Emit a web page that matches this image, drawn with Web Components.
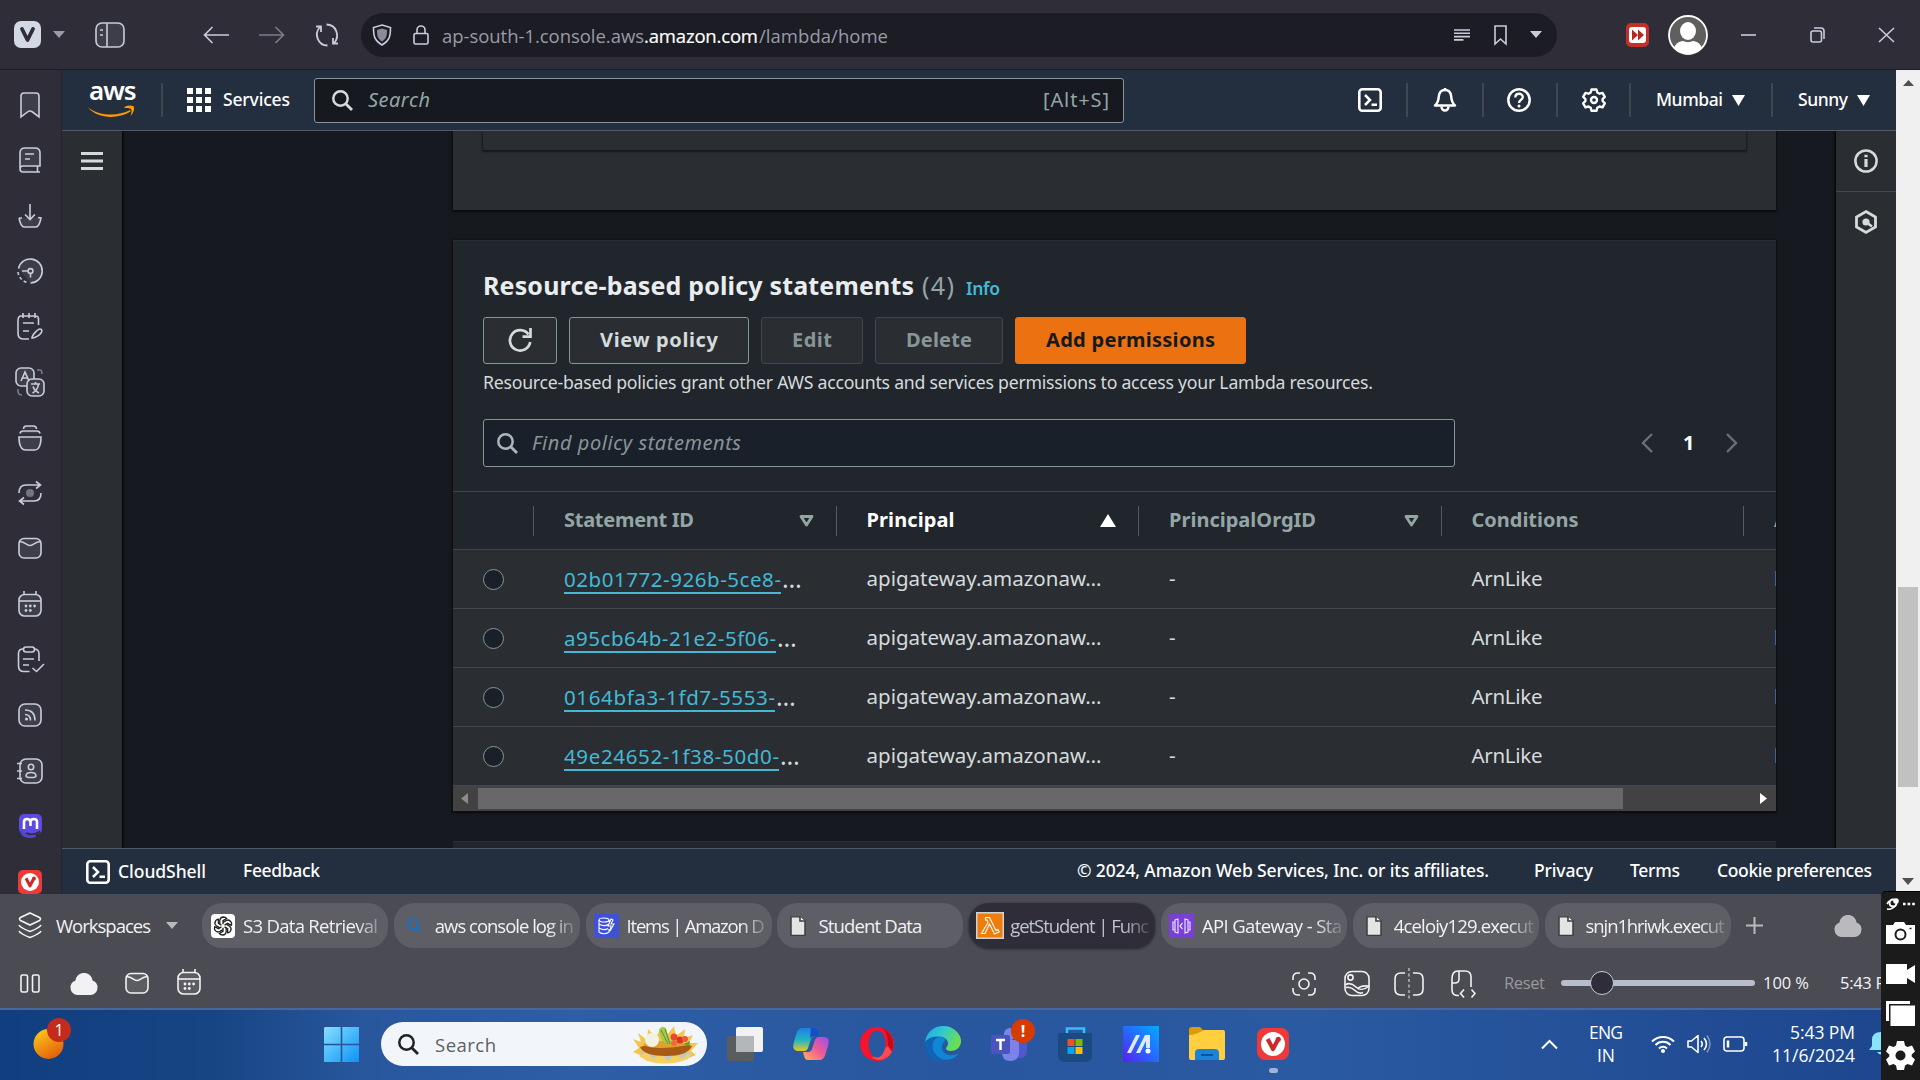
<!DOCTYPE html>
<html lang="en">
<head>
<meta charset="utf-8">
<title>Lambda console</title>
<style>
html,body{margin:0;height:100%;background:#16191f;overflow:hidden}
body{font-family:"Open Sans","Noto Sans",sans-serif}
</style>
</head>
<body>
<desktop-screen></desktop-screen>
<script>
const base = '*{box-sizing:border-box}ui-icon,fit-text{flex:none}';
function define(name, css, html) {
  const t = document.createElement('template');
  t.innerHTML = `<style>${base}${css}</style>${html}`;
  customElements.define(name, class extends HTMLElement {
    constructor() { super(); this.attachShadow({mode: 'open'}); }
    connectedCallback() {
      if (!this.shadowRoot.childNodes.length) this.shadowRoot.append(document.importNode(t.content, true));
    }
  });
}

/* Text run tracked so that it spans the width given in "w". */
customElements.define('fit-text', class extends HTMLElement {
  constructor() {
    super();
    this.attachShadow({mode: 'open'}).innerHTML = '<style>:host{display:inline-block;white-space:nowrap}</style><slot></slot>';
  }
  connectedCallback() {
    const w = +this.getAttribute('w');
    if (!w) return;
    const n = this.textContent.length, cur = this.getBoundingClientRect().width;
    if (n > 1) this.style.letterSpacing = ((w - cur) / (n - 1)) + 'px';
    this.style.width = w + 'px';
  }
});

const soft = 'fill="currentColor" fill-opacity=".1"';
const doc = '<path d="M1 1h9l5 5v17H1z" fill="#e4e4e4" stroke="#3c3c40" stroke-width="1.5"/><path d="M10 1v5h5" fill="#fff" stroke="#3c3c40"/>';
const viv = (r) => `<rect width="24" height="24" rx="${r}" fill="#ef3939"/><circle cx="12" cy="12" r="9" fill="#fff"/><path d="M8 8.2l4 7.6 4-7.6" fill="none" stroke="#c92a2a" stroke-width="3.1" stroke-linejoin="round"/><circle cx="16" cy="8.4" r="1.9" fill="#c92a2a"/>`;
const mail = `<rect x="1" y="1.5" width="22" height="19.5" rx="5" ${soft}/><path d="M1.5 4.5c6 .5 7.500 4 10.500 4s4.500-3.500 10.500-4"/>`;
const cal = `<path d="M6 0v4M18 0v4"/><rect x="1" y="3.500" width="22" height="21.500" rx="5.500" ${soft}/><path d="M1 10h22"/><g fill="currentColor" stroke="none"><circle cx="8" cy="15" r="1.400"/><circle cx="12.300" cy="15" r="1.400"/><circle cx="16.600" cy="15" r="1.400"/><circle cx="8" cy="19.500" r="1.400"/><circle cx="12.300" cy="19.500" r="1.400"/></g>`;
const I = {
  vlogo: [27,27,'<rect width="27" height="27" rx="7" fill="#d3d8e4"/><path d="M8 8l5.500 11L19 8" fill="none" stroke="#2f2e38" stroke-width="3.800" stroke-linejoin="round" stroke-linecap="round"/>'],
  caret: [12,7,'<path d="M0 0h12L6 7z" fill="currentColor"/>'],
  caretb: [13,11,'<path d="M0 0h13L6.500 11z" fill="currentColor"/>'],
  panel: [30,26,`<rect x="1" y="1" width="28" height="24" rx="6" ${soft}/><path d="M12 1v24M5 8h3M5 13h3"/>`],
  back: [26,18,'<path d="M26 9H1.500M9.500 1L1.500 9l8 8"/>'],
  fwd: [26,18,'<path d="M0 9h24.500M16.500 1l8 8-8 8"/>'],
  reload: [24,24,'<path d="M12.500 22.500C3 22.500-1.500 11 5 4M1 3.500h5V9M11.500 1.500C21 1.500 25.500 13 19 20M23 20.500h-5V15" stroke-width="1.800"/>'],
  shield: [20,22,'<path d="M10 1l8.500 2.500c0 9-1 13-8.500 17.500C2.500 16.500 1.500 12.500 1.500 3.500z"/><path d="M10 4.500l5 1.500c0 6-.7 8.500-5 11.500-4.300-3-5-5.500-5-11.500z" fill="#8a8c98" stroke="none"/>',1],
  lock: [16,20,'<rect x="1" y="8.500" width="14" height="10.500" rx="1.500"/><path d="M4 8.500V5a4 4 0 0 1 8 0v3.500"/>'],
  reader: [16,12,'<path d="M0 1h16M0 4.300h16M0 7.600h16M0 10.900h9.500" stroke-width="1.600"/>'],
  mark: [13,20,'<path d="M1 1h11v18l-5.500-5L1 19z"/>'],
  ext: [23,24,'<rect width="23" height="24" rx="5" fill="#c62f28"/><rect x="3" y="4" width="17" height="16" rx="3" fill="#fff"/><path d="M6 6.500l6 5.500-6 5.500zM12 6.500l6 5.500-6 5.500z" fill="#b8281f"/>'],
  avatar: [40,40,'<defs><clipPath id="c"><circle cx="20" cy="20" r="19"/></clipPath></defs><circle cx="20" cy="20" r="19" fill="#5f5f5f"/><g clip-path="url(#c)" fill="#fff"><ellipse cx="20" cy="16" rx="8" ry="9"/><path d="M4 42c0-12 7-16 11-16 3 1.500 7 1.500 10 0 4 0 11 4 11 16z"/></g><circle cx="20" cy="20" r="19" fill="none" stroke="#fff" stroke-width="1.800"/>'],
  min: [15,2,'<path d="M0 1h15"/>'],
  restore: [15,16,'<rect x="1" y="4" width="10.500" height="11" rx="2"/><path d="M4 1h7q3 0 3 3v8"/>'],
  close: [15,16,'<path d="M0 1l15 14M15 1L0 15"/>'],
  bookmark: [20,26,`<path d="M1 4q0-3 3-3h12q3 0 3 3v21l-6.500-5q-2.500-2-5 0L1 25z" ${soft}/>`],
  book: [22,26,`<path d="M1 21V6q0-5 5-5h10q5 0 5 5v13H4q-3 0-3 3t3 3h17M18.500 19.500v5M6 7h9M6 12h5" ${soft}/>`],
  download: [24,24,`<path d="M1 14c1 5 2 9 5 9h12c3 0 4-4 5-9l-3-.5M1 14h3M12 0v15M7 10.500l5 5 5-5" ${soft}/>`],
  history: [26,26,`<path d="M1.500 10.500a12 12 0 1 1 12 14.500" ${soft}/><path d="M1 14a12 12 0 0 0 9.500 10.500" stroke-dasharray="3 2.500"/><path d="M5 13h6.500M13.500 15.500v4"/><circle cx="13.500" cy="13" r="2.400"/>`],
  notes: [26,27,'<path d="M21.500 12V6q0-3-3-3H4Q1 3 1 8v12q0 6 5 6h6M6 0v5M12 0v5M18 0v5M6 10h11M6 18h6"/><path d="M15 25c0-3 6-9 8-9s2.500 2 1 4-6 5.500-9 5z"/>'],
  translate: [30,30,`<rect x="1" y="1" width="18" height="18" rx="5" ${soft}/><rect x="12" y="12" width="17" height="17" rx="5" fill="#3d3d47"/><path d="M6 14l4-9 4 9M7.500 11h5M16 17h9M20.500 15v2M17.500 26c4-2 5.500-5 6-9M18 19.500c1 3 3 5 6 6.500"/><path d="M22 3h3q2 0 2 4M3 22v2q0 4 4 4" opacity=".5"/>`,1],
  stack: [24,26,`<path d="M5.500 4q0-3 3-3h7q3 0 3 3M2 8.500q.5-2.500 3-2.500h14q2.500 0 3 2.500M1 12h22c0 5-1 9-2.500 11-1 2-3 2-4 2h-9c-2 0-3-.5-4-2C2 21 1 17 1 12z" ${soft}/>`],
  sync: [24,26,'<path d="M1 13C1 7 4 5 8 5h14M18 1.500L22.500 5 18 8.500M23 13c0 6-3 8-7 8H2M6 17.500L1.500 21 6 24.500"/><circle cx="12" cy="13" r="4" fill="currentColor" stroke="none" opacity=".45"/>'],
  mail: [24,23,mail], cal: [24,26,cal],
  tasks: [27,27,'<path d="M6 3Q1.500 3 1.500 7.500V20q0 5.500 5.500 5.500h5.500M17 3q5 0 5 5v7M6 13h11M6 19h6M15.500 22l4 3.500L27 18"/><rect x="6.500" y="1" width="11" height="5" rx="2.500"/>'],
  feed: [24,24,`<rect x="1" y="1" width="22" height="22" rx="6" ${soft}/><circle cx="8.500" cy="16" r="1.600" fill="currentColor" stroke="none"/><path d="M7 11.500q5.500 0 5.500 6M7 7q10 0 10 10.500"/>`],
  contacts: [26,26,`<rect x="3" y="1" width="22" height="24" rx="6" ${soft}/><path d="M0 5.500h5M0 13h5M0 20.500h5"/><circle cx="14" cy="9" r="2.700"/><path d="M9 18q0-3.500 5-3.500t5 3.500q0 1.500-5 1.500T9 18z"/>`],
  masto: [23,24,'<rect width="23" height="20" rx="5" fill="#5b4be0"/><path d="M1 15c0 7 5 9 10 9 3 0 5-.6 6-1.500l0-2H9z" fill="#5344cf"/><path d="M5 15V8q0-3 3-3t3.500 3v4V8q0-3 3.300-3t3.200 3v7" fill="none" stroke="#fff" stroke-width="2.600"/><path d="M7 19q7 3 14-1.500" fill="none" stroke="#2f2e38" stroke-width="1.500"/>'],
  viv: [24,24,viv(5)], viv2: [32,32,`<g transform="scale(1.333)">${viv(6)}</g>`],
  smile: [47,12,'<path d="M0 2.500c13 9.500 31 8.500 42 2.500l.5 1.500C29 15 9 13.500 0 2.500z" fill="#f90"/><path d="M36 3c2-3 7-3 10-1.500.5 3-.5 6.500-3.500 9.500 1-3 1.500-5.500.5-7-2-1.200-4-1.200-7-1z" fill="#f90"/>'],
  grid: [24,24,'<path d="M0 0h6v6H0zM9 0h6v6H9zM18 0h6v6h-6zM0 9h6v6H0zM9 9h6v6H9zM18 9h6v6h-6zM0 18h6v6H0zM9 18h6v6H9zM18 18h6v6h-6z" fill="currentColor"/>'],
  search: [21,21,'<circle cx="8.500" cy="8.500" r="7.200" stroke-width="2.500"/><path d="M13.500 13.500l6.500 6.500" stroke-width="2.800"/>'],
  shell: [24,24,'<rect x="1.300" y="1.300" width="21.400" height="21.400" rx="3" stroke-width="2.600"/><path d="M7 7l5 5-5 5M13.500 16.800H19" stroke-width="2.500"/>'],
  bell: [24,24,'<path d="M2 17.500c3-2.500 3.500-5 3.800-9C6.200 4 9 2 12 2s5.800 2 6.200 6.500c.3 4 .8 6.500 3.800 9z" stroke-width="2.500" stroke-linejoin="round"/><path d="M8.500 18.500a3.500 4 0 0 0 7 0M12 0v2" stroke-width="2.500"/>'],
  help: [24,24,'<circle cx="12" cy="12" r="10.700" stroke-width="2.500"/><path d="M8.300 9.500c0-5 7.500-4.800 7.500-.5 0 3-3.800 2.500-3.800 6" stroke-width="2.300"/><circle cx="12" cy="18" r="1.500" fill="currentColor" stroke="none"/>'],
  gear: [24,24,'<path d="M9.500 1.500h5l.8 3 2.200 1.200 3-.8 2.300 4-2.200 2.300v1.800l2.200 2.300-2.300 4-3-.8-2.200 1.200-.8 3h-5l-.8-3-2.200-1.200-3 .8-2.300-4L3.400 13v-2L1.200 8.900l2.300-4 3 .8 2.200-1.200z" stroke-width="2.400" stroke-linejoin="round"/><circle cx="12" cy="12" r="3" stroke-width="2.400"/>'],
  menu: [22,18,'<path d="M0 1.500h22M0 9h22M0 16.500h22" stroke-width="3"/>'],
  info: [24,24,'<circle cx="12" cy="12" r="10.600" stroke-width="2.500"/><path d="M12 10v8M12 5.800v2.400" stroke-width="3.200"/>'],
  hexa: [22,24,'<path d="M11 1.500l9.500 5.500v10L11 22.500 1.500 17V7z" stroke-width="2.800"/><circle cx="11" cy="12" r="3.600" fill="currentColor" stroke="none"/><path d="M11 12l6 4.500" stroke-width="2.600"/>'],
  up: [11,6,'<path d="M0 6h11L5.500 0z" fill="currentColor"/>'],
  refresh: [24,25,'<path d="M20.500 6.500A10.200 10.200 0 1 0 22.200 14" stroke-width="2.700"/><path d="M22.500 0v8.700H14.500" stroke-width="2.700"/>'],
  prev: [12,20,'<path d="M11 1L2 10l9 9" stroke-width="2.400"/>'], next: [12,20,'<path d="M1 1l9 9-9 9" stroke-width="2.400"/>'],
  sort: [15,12,'<path d="M2 1.500h11L7.500 10z" stroke-width="2.800" stroke-linejoin="round"/>'],
  sorted: [16,13,'<path d="M0 13h16L8 0z" fill="currentColor"/>'],
  left: [7,11,'<path d="M7 0v11L0 5.500z" fill="currentColor"/>'], right: [7,11,'<path d="M0 0v11l7-5.500z" fill="currentColor"/>'],
  spaces: [24,27,'<path d="M12 1l9.500 4.500q2 1.500 0 3L12 13 2.500 8.500q-2-1.500 0-3zM1 13c1 2 7 5 11 6.500 4-1.500 10-4.500 11-6.500M1 19c1 2 7 5 11 6.500 4-1.500 10-4.500 11-6.500"/>'],
  gpt: [24,24,'<rect width="24" height="24" rx="4" fill="#fff"/><g fill="none" stroke="#222" stroke-width="1.300">'+[0,60,120,180,240,300].map(a=>`<path transform="rotate(${a} 12 12)" d="M8.800 10.200V6.200q.5-3 3.600-3.200 2 0 3.200 1.500L12 6.700v3.500"/>`).join('')+'</g>'],
  bsearch: [15,15,'<circle cx="6" cy="6" r="5" stroke="#1671c4" stroke-width="2.200"/><path d="M9.500 9.500L14 14" stroke="#1671c4" stroke-width="2.200"/>'],
  dynamo: [25,24,'<rect width="25" height="24" fill="#3f51d6"/><g stroke="#fff" stroke-width="1.100" fill="none"><ellipse cx="10" cy="6" rx="5" ry="2"/><path d="M5 6v12q5 3.500 10 0v-3M5 10q5 3 9 .5M5 14q5 3 9 .5M15 6v2M17 5l-3 7h3l-1 5 4-7h-3l2-4z"/></g>'],
  doc: [16,24,`<g transform="translate(0 2) scale(1 .84)">${doc}</g>`],
  lambda: [28,27,'<rect width="28" height="27" fill="#d3d3d3"/><rect x="1.500" y="1.500" width="25" height="24" fill="#ee7d0b"/><path d="M9.500 5.500h4l6.500 13 2-1 1 2.500-4.500 2-5-10-4.500 9.500H5.500L12 10.500 11 8H9.500z" fill="none" stroke="#fff" stroke-width="1.100"/>'],
  api: [25,24,'<rect width="25" height="24" fill="#7a3fd6"/><path d="M9 5L6 6v12l3 1zM16 5l3 1v12l-3 1zM6 8H4v8h2M19 8h2v8h-2M13.500 9l-2.500 3 2.500 3" fill="none" stroke="#e8dcff" stroke-width="1.200"/>'],
  plus: [17,17,'<path d="M8.500 0v17M0 8.500h17" stroke-width="2"/>'],
  cloud: [30,22,'<path d="M8 22a7.500 7.500 0 0 1-1.500-14.500C7 2.500 11 0 15 0s8 2.500 8.500 7.500A7.500 7.500 0 0 1 22 22z" fill="currentColor"/>'],
  pause: [20,19,'<rect x="1" y="1" width="6.500" height="17" rx="1.500"/><rect x="12.500" y="1" width="6.500" height="17" rx="1.500"/>'],
  capture: [24,24,'<path d="M1 8V6q0-5 5-5h2M16 1h2q5 0 5 5v2M23 16v2q0 5-5 5h-2M8 23H6q-5 0-5-5v-2"/><circle cx="12" cy="12" r="5"/>'],
  image: [26,27,'<rect x="1" y="1.500" width="24" height="24" rx="7"/><circle cx="6.500" cy="7.500" r="2.600"/><path d="M1 15c4-2.500 8-1 11 2s8 3.500 13-1"/><path d="M14 18.500c2-2.500 6-3 11-2.500M2 17.500c4-1 7 1 9 3s5 3.500 8 2"/>'],
  split: [30,32,'<path d="M11 5H7q-6 0-6 6v10q0 6 6 6h4M19 5h4q6 0 6 6v10q0 6-6 6h-4"/><path d="M15 0v32" stroke-dasharray="3 2.500" opacity=".6"/>'],
  pagecode: [25,27,'<path d="M8 25.500Q1 26 1 20V9q0-8 6-8h7q6 0 6 6v10M1 13h3q4 0 4-4V1M13 19.500l-3.500 4 3.500 4M20.500 19.500l3.500 4-3.500 4"/>'],
  weather: [31,30,'<defs><linearGradient id="w" x2=".6" y2="1"><stop stop-color="#ffd21c"/><stop offset="1" stop-color="#e4610b"/></linearGradient></defs><circle cx="15.500" cy="15" r="15" fill="url(#w)"/>'],
  win: [35,35,'<defs><linearGradient id="g" x2="1" y2="1"><stop stop-color="#87dffd"/><stop offset="1" stop-color="#0a94f7"/></linearGradient></defs><path d="M1 0h15.700v16.700H0V1zM18.300 0H35v16.700H18.300zM0 18.300h16.700V35H0zM18.300 18.300H35V35H18.300z" fill="url(#g)"/>'],
  food: [70,40,'<path d="M2 15l8 3-3-9 9 7 1-11 8 8 6-11 5 9 7-9 2 10 9-7-1 9 9-3-4 8 9 0-7 8 5 4-12 5-12 2H26L9 31l-7-3 6-4z" fill="#f4c64e"/><ellipse cx="35" cy="31" rx="26" ry="6" fill="#bfc9c2"/><path d="M8 32l8-4 6 7 8-6 7 8 7-8 7 6 10-8-4 8q-20 8-41 2z" fill="#f6cf5f"/><path d="M9 23q26-9 52-1-4 10-26 10T9 23z" fill="#a85b14"/><path d="M12 21q12 6 46 0-5-4-24-4t-22 4z" fill="#e1a22a"/><circle cx="21" cy="16" r="7" fill="#f2f2e4"/><path d="M28 5q7-5 8 3l5 13q-13-1-13-16z" fill="#a8c850"/><path d="M30 6l7 14M34 5l5 15" stroke="#668d2a" stroke-width="1"/><circle cx="43" cy="13" r="3.500" fill="#e84a2b"/><circle cx="49" cy="16" r="3.500" fill="#d93520"/><circle cx="43" cy="19" r="3" fill="#ee6a3c"/><circle cx="54" cy="15" r="3" fill="#ee5a35"/><path d="M53 20l6-3-1 5z" fill="#5f9e3a"/>'],
  tview: [36,34,'<rect y="9" width="27" height="25" rx="2" fill="#595d60"/><rect x="9" width="27" height="25" rx="2" fill="#f2f2f2"/><path d="M9 9h18v16H9z" fill="#b3b7ba"/>'],
  copilot: [36,34,'<defs><linearGradient id="a" x2="0" y2="1"><stop stop-color="#1b7fe6"/><stop offset=".55" stop-color="#27b6c0"/><stop offset="1" stop-color="#e9c81f"/></linearGradient><linearGradient id="b" x1="1" x2="0" y2="1"><stop stop-color="#9b4cf0"/><stop offset=".5" stop-color="#ef5b93"/><stop offset="1" stop-color="#ffb25b"/></linearGradient></defs><path d="M10 1h12q3 0 4 4l1 4h-6q-2 0-3 3l-3 9q-1 3-4 3H5q-6 0-4.500-7l3-11Q5 1 10 1z" fill="url(#a)"/><path d="M18 1h4q3 0 4 4l1 4h-6q-3 0-4 3z" fill="#174ec2"/><path d="M26 33H15q-3 0-4-4l-1-4h5q3 0 4-3l3-9q1-3 4-3h5q6 0 4.500 7l-3 10Q31 33 26 33z" fill="url(#b)"/>'],
  opera: [34,34,'<circle cx="17" cy="17" r="17" fill="#f5142b"/><path d="M22 1a17 17 0 0 1 0 32q6-4 6-16T22 1z" fill="#c30a1d"/><path d="M12 31q12 6 20-6l-4-6z" fill="#ff4a4f"/><ellipse cx="17" cy="17" rx="8.500" ry="13.500" fill="#28589f"/>'],
  edge: [36,36,'<defs><linearGradient id="e" x2="1" y2=".4"><stop stop-color="#1ba5e8"/><stop offset=".5" stop-color="#2fc9d0"/><stop offset="1" stop-color="#6bdf50"/></linearGradient></defs><path d="M0 17C1 6 9 0 18 0c11 0 18 8 18 15 0 7-6 10-10 10-3 0-5-1-5-2.500s2-2 2-5c0-4-4-7-9-7C7 10.500 1 14 0 17z" fill="url(#e)"/><path d="M0 17c2-5 8-7 13-6-5 1-8 7-6 13 2 7 8 11 14 11-10 3-21-5-21-18z" fill="#0d65b8"/><path d="M13 11c-7 3-7 13-2 18 6 7 18 6 23-2-6 4-17 3-17-6 0-5 4-5 3-8-2-2-5-2.500-7-2z" fill="#1086d6"/>'],
  teams: [36,36,'<circle cx="19" cy="8" r="6" fill="#7b83eb"/><circle cx="30" cy="11" r="4" fill="#5059c9"/><path d="M22 14h14v11q0 7-7 7h-4z" fill="#5059c9"/><path d="M11 14h17v12q0 9-9 9-8 0-8-9z" fill="#7b83eb"/><rect y="9" width="19" height="19" rx="2" fill="#4b53bc"/><path d="M5 14h9M9.500 14v10" stroke="#fff" stroke-width="2.500" fill="none"/>'],
  store: [34,35,'<path d="M9 7V1.500h17V7" fill="none" stroke="#35c0f5" stroke-width="2.500"/><path d="M0 6h34v22q0 7-7 7H7q-7 0-7-7z" fill="#1b4a80"/><path d="M9.500 12h7v7h-7z" fill="#f25022"/><path d="M17.500 12h7v7h-7z" fill="#7fba00"/><path d="M9.500 20h7v7h-7z" fill="#00a4ef"/><path d="M17.500 20h7v7h-7z" fill="#ffb900"/>'],
  asus: [36,36,'<defs><linearGradient id="m" x1="0" y1="1" x2="1" y2="0"><stop stop-color="#5b1df5"/><stop offset=".5" stop-color="#2569ff"/><stop offset="1" stop-color="#05aaff"/></linearGradient></defs><rect width="36" height="36" fill="url(#m)"/><path d="M4 27L13 9h4L8 27zM13 27L22 9h4L17 27zM23 9h4v13h-4z" fill="#dfe9ff"/><circle cx="25" cy="25" r="2.500" fill="#fff"/>'],
  folder: [36,34,'<path d="M0 3q0-3 3-3h8l4 4v6H0z" fill="#dd9b07"/><path d="M0 8q7 0 15-5h19q2 0 2 2v26q0 2-2 2H2q-2 0-2-2z" fill="#ffcf3f"/><path d="M6 33v-7q0-4 4-4h16q4 0 4 4v7z" fill="#1a83d8"/><path d="M12 28h12" stroke="#0b5296" stroke-width="2"/>'],
  chev: [17,9,'<path d="M1 8.500L8.500 1 16 8.500" stroke-width="2"/>'],
  wifi: [24,18,'<path d="M1 6.500a15.500 15.500 0 0 1 22 0M4.500 10a10.500 10.500 0 0 1 15 0M8 13.500a5.700 5.700 0 0 1 8 0" stroke-width="2"/><circle cx="12" cy="16" r="2" fill="currentColor" stroke="none"/>'],
  sound: [24,20,'<path d="M1 7h3.500L11 1.500v17L4.500 13H1z" stroke-linejoin="round"/><path d="M14 7q2.500 3 0 6M17 4q5 6 0 12"/><path d="M20 1.500q6 8.500 0 17" opacity=".4"/>'],
  battery: [24,16,'<rect x="1" y="1" width="20" height="14" rx="3"/><path d="M23 6v4M5 4.500v7" stroke-width="2.500"/>'],
  notif: [24,24,'<path d="M0 18l3-4V8q0-8 9-8t9 8v6l3 4zM8 20h8q-4 5-8 0z" fill="#87e4fc"/>'],
  brush: [13,12,'<circle cx="7" cy="5" r="3.500" stroke-width="2"/><circle cx="10" cy="3" r="2" fill="currentColor"/><path d="M1 11q5 1 9-4M1 6l2-3" stroke-width="1.500"/>'],
  dots: [12,4,'<path d="M0 2h2.600M4.600 2h2.600M9.200 2h2.600" stroke-width="2.600"/>'],
  camera: [29,22,'<path d="M0 3h7l2-3h9l2 3h9v19H0z" fill="#fff"/><circle cx="14.500" cy="12.500" r="5" fill="none" stroke="#1b1b1b" stroke-width="2"/><path d="M23.500 6.500h2" stroke="#1b1b1b" stroke-width="1.500"/>'],
  video: [29,20,'<path d="M0 0h21v6l8-5v18l-8-5v6H0z" fill="#fff"/>'],
  layers: [29,25,'<path d="M0 0h24v3H3v17H0z" fill="#fff"/><path d="M4.500 4.500H29V25H4.500z" fill="#fff"/>'],
  cog: [29,29,'<path d="M11 0h7l1 4.500 2.500 1.400L26 4.500l3 6-3.300 3v2l3.300 3-3 6-4.500-1.400L19 24.500 18 29h-7l-1-4.500-2.500-1.400L3 24.500l-3-6 3.300-3v-2L0 10.500l3-6 4.500 1.400L10 4.500z" fill="#fff"/><circle cx="14.500" cy="14.500" r="5" fill="#1b1b1b"/>']
};
customElements.define('ui-icon', class extends HTMLElement {
  constructor() { super(); this.attachShadow({mode: 'open'}); }
  connectedCallback() {
    const [w, h, body, stroked] = I[this.getAttribute('name')];
    this.shadowRoot.innerHTML = `<style>:host{display:block;width:${w}px;height:${h}px}svg{display:block;overflow:visible}</style><svg width="${w}" height="${h}" viewBox="0 0 ${w} ${h}" fill="none" stroke="currentColor" stroke-width="1.6"><g ${!stroked && /fill="#|url\(|^<path[^>]*fill="currentColor"\/>$/.test(body) ? 'stroke="none"' : ''}>${body}</g></svg>`;
  }
});
const ic = (name, ml = 0, extra = '') => `<ui-icon name="${name}" style="margin-left:${ml}px;${extra}"></ui-icon>`;
const tx = (s, w, ml = 0, extra = '') => `<fit-text w="${w}" style="margin-left:${ml}px;${extra}">${s}</fit-text>`;
const dv = (ml) => `<i class="dv" style="margin-left:${ml}px"></i>`;

define('browser-toolbar', `:host{display:flex;align-items:center;height:70px;background:#2f2e38;border-bottom:1px solid #1d1c24;color:#c8ccdb;flex:none}
.pill{display:flex;align-items:center;width:1196px;height:44px;border-radius:22px;background:#1c1c24;margin-left:22px;font-size:18.500px;color:#989ba8}
.pill ui-icon{color:#c8ccdb}.pill fit-text{margin-top:1px}`,
 ic('vlogo',14)+ic('caret',12,'color:#989ba8')+ic('panel',30)+ic('back',78)+ic('fwd',30,'opacity:.5')+ic('reload',30)+
 `<div class="pill">${ic('shield',11)+ic('lock',21)+tx('ap-south-1.console.aws',202,13)+tx('.amazon.com',114,0,'color:#fff;-webkit-text-stroke:.2px')+tx('/lambda/home',129,1)+ic('reader',566)+ic('mark',24)+ic('caret',23)}</div>`+
 ic('ext',69)+ic('avatar',19)+ic('min',33)+ic('restore',54)+ic('close',54));

const side = ['bookmark','book','download','history','notes','translate','stack','sync','mail','cal','tasks','feed','contacts','masto','viv'];
define('side-panel', `:host{display:block;width:62px;padding-top:7px;background:#2f2e38;border-right:1px solid #27262e;color:#c8ccdb;flex:none;overflow:hidden}
.c{height:55.500px;display:flex;align-items:center;justify-content:center;margin-right:1px}`,
 side.map(n => `<div class="c">${ic(n)}</div>`).join(''));

define('console-header', `:host{display:flex;align-items:center;height:61px;background:#232f3e;border-bottom:1px solid #545b64;color:#fff;font-size:17.500px;font-weight:500;flex:none}
.dv{width:2px;height:34px;background:#414750;flex:none}.logo{width:47px;margin-left:26px;flex:none}.logo fit-text{font-size:26px;font-weight:600;line-height:24px;display:block;height:24px;margin-top:-6px}
.s{display:flex;align-items:center;width:810px;height:45px;margin-left:24px;border:1px solid #879596;border-radius:3px;background:#16191f;font-weight:400;font-size:20px;color:#95a5a6;flex:none}`,
 `<div class="logo">${tx('aws',44,1)}${ic('smile',0,'margin-top:3px')}</div>`+dv(26)+ic('grid',24)+tx('Services',67,12,'margin-top:-2px')+
 `<div class="s">${ic('search',17,'color:#d5dbdb')+tx('<em>Search</em>',62,15,'margin-top:-2px')+tx('[Alt+S]',66,613,'margin-top:-2px')}</div>`+
 ic('shell',234)+dv(24)+ic('bell',25)+dv(25)+ic('help',23)+dv(25)+ic('gear',24)+dv(23)+tx('Mumbai',67,25,'margin-top:-2px')+ic('caretb',9)+dv(26)+tx('Sunny',50,25,'margin-top:-2px')+ic('caretb',9));

const col = (s, w, icon, cls='') => `<div class="col ${cls}"><fit-text ${w?`w="${w}"`:''}>${s}</fit-text>${icon?`<ui-icon name="${icon}"></ui-icon>`:''}</div>`;
const row = (id, w) => `<div class="row"><div class="r0"><i></i></div><div class="col">${tx(id,w,0,'color:#44b9d6;border-bottom:2px solid #44b9d6;line-height:22px;height:26px;margin-top:3px')}${tx('...',21,1)}</div><div class="col">${tx('apigateway.amazonaw…',235)}</div><div class="col">${tx('-',8)}</div><div class="col">${tx('ArnLike',71)}</div><div class="col">${tx('l',5)}</div></div>`.replace('>...<', '>…<').replace('w="21" style="', 'w="21" style="font-size:25px;');
define('policy-table', `:host{display:block;overflow:hidden;color:#d5dbdb;font-size:20.500px}
.row,.head{display:flex;align-items:center;width:1323px;overflow:hidden}
.head{height:59px;border-top:1px solid #414750;border-bottom:1px solid #414750;font-weight:700;font-size:20px;color:#95a5a6}
.row{height:59px;background:#2a2e33;border-bottom:1px solid #414750}.row:last-of-type{border-bottom-color:#2a2e33}
.r0{width:81px;padding-left:30px;flex:none}.head .r0{width:80px}.r0 i{display:block;width:21px;height:21px;border:1.500px solid #879596;border-radius:50%;background:#1a2029}
.col{width:302.500px;flex:none;display:flex;align-items:center;padding-left:30px;white-space:nowrap}.col fit-text{margin-top:-2px}
.head .col{height:30px;border-left:1px solid #545b64;justify-content:space-between;padding-right:22px}
.on{color:#fff}.bar{height:25px;background:#424242;display:flex;align-items:center;justify-content:space-between;padding:0 9px 0 8px;color:#8b8b8b}
.bar i{width:1145px;height:21px;background:#686868;margin-left:10px;margin-right:auto}`,
 `<div class="head"><div class="r0"></div>${col('Statement ID',130,'sort')}${col('Principal',88,'sorted','on')}${col('PrincipalOrgID',147,'sort')}${col('Conditions',107)}${col('A',14)}</div>`+
 row('02b01772-926b-5ce8-',217)+row('a95cb64b-21e2-5f06-',212)+row('0164bfa3-1fd7-5553-',211)+row('49e24652-1f38-50d0-',215)+
 `<div class="bar">${ic('left')}<i></i>${ic('right',0,'color:#fff')}</div>`);

define('action-button', `:host{display:flex;align-items:center;justify-content:center;height:47px;border:1px solid #879596;border-radius:3px;background:#2a2e33;color:#d5dbdb;font-size:20px;font-weight:700;margin-right:12px}
:host([disabled]){border-color:#414750;color:#879596}:host([primary]){background:#ec7211;border-color:#ec7211;color:#16191f}`, '<slot></slot>');

define('policy-card', `:host{display:block;width:1323px;height:571px;background:#21252c;border-top:1px solid #2a2e33;box-shadow:0 1px 2px 1px rgba(0,0,0,.55);margin:30px 0 30px 331px;flex:none}
.pad{height:250px;padding:0 30px;overflow:hidden}
h2{margin:26px 0 0;font-size:25px;line-height:36px;height:36px;color:#eaeded;display:flex;align-items:baseline;font-weight:700}
.btns{display:flex;margin-top:14px}.btns fit-text{margin-top:-2px}p{margin:5px 0 0;font-size:17.700px;line-height:26px;color:#d5dbdb;height:26px}
.find{display:flex;align-items:center;margin-top:24px}.in{width:972px;height:48px;border:1px solid #879596;border-radius:3px;background:#1a2029;color:#879596;font-size:20px;display:flex;align-items:center;flex:none}`,
 `<div class="pad"><h2>${tx('Resource-based policy statements',431)+tx('(4)',32,8,'font-weight:400;color:#95a5a6')+tx('Info',34,12,'font-size:17.500px;font-weight:600;color:#44b9d6')}</h2>
 <div class="btns"><action-button style="width:74px">${ic('refresh')}</action-button><action-button style="width:180px">${tx('View policy',118)}</action-button><action-button disabled style="width:102px">${tx('Edit',40)}</action-button><action-button disabled style="width:128px">${tx('Delete',66)}</action-button><action-button primary style="width:231px">${tx('Add permissions',169)}</action-button></div>
 <p>${tx('Resource-based policies grant other AWS accounts and services permissions to access your Lambda resources.',890)}</p>
 <div class="find"><div class="in">${ic('search',13,'color:#aab7b8')+tx('<em>Find policy statements</em>',209,14,'margin-top:-2px')}</div>${ic('prev',186,'color:#687078')+tx('1',11,30,'font-size:20px;font-weight:700;color:#fff;margin-top:-2px')+ic('next',32,'color:#687078')}</div></div>
 <policy-table></policy-table>`);

define('console-body', `:host{display:flex;height:717px;background:#16191f;overflow:hidden;color:#d5dbdb;flex:none}
.nav{width:60px;background:#2a2e33;padding:21px 19px;box-shadow:1px 0 2px #000;flex:none}.main{width:1714px;display:flex;flex-direction:column;overflow:hidden;flex:none}
.prev{width:1323px;height:79px;margin-left:331px;background:#2a2e33;padding:0 30px;box-shadow:0 1px 2px 1px rgba(0,0,0,.55);flex:none}.prev div{height:19px;box-shadow:0 1px 2px 1px rgba(0,0,0,.5);clip-path:inset(0 -4px -4px -4px)}
.nxt{width:1323px;height:20px;margin-left:331px;background:#21252c;border-top:1px solid #2a2e33;flex:none}
.tools{width:60px;background:#2a2e33;box-shadow:-1px 0 2px #000;flex:none}.tools div{height:61px;display:flex;align-items:center;justify-content:center;border-bottom:1px solid #414750}.tools div:last-child{border:0;height:60px}`,
 `<div class="nav">${ic('menu')}</div><div class="main"><div class="prev"><div></div></div><policy-card></policy-card><div class="nxt"></div></div><div class="tools"><div>${ic('info')}</div><div>${ic('hexa')}</div></div>`);

define('console-footer', `:host{display:flex;align-items:center;height:46px;background:#232f3e;border-top:1px solid #545b64;color:#fff;font-size:17.500px;font-weight:500;flex:none}fit-text{margin-top:-4px}`,
 ic('shell',24)+tx('CloudShell',88,8,'margin-top:-1px')+tx('Feedback',77,37)+tx('© 2024, Amazon Web Services, Inc. or its affiliates.',412,757)+tx('Privacy',59,45)+tx('Terms',50,37)+tx('Cookie preferences',155,37));

define('page-scrollbar', `:host{display:flex;flex-direction:column;align-items:center;width:24px;height:824px;background:#f0f0f0;color:#505050;flex:none}i{width:20px;height:200px;background:#c1c1c1;margin-top:501px}`,
 ic('up',0,'margin-top:10px')+'<i></i>'+ic('caret',0,'margin-top:91px'));

define('page-tab', `:host{display:flex;align-items:center;width:186px;height:45px;border-radius:20px;background:#5e5e66;color:#f2f2f4;font-size:18.500px;margin-right:5.800px;flex:none;overflow:hidden;padding-left:9px;white-space:nowrap}
:host([active]){background:#2f2e38;color:#c0c3d2;padding-left:7px;box-shadow:0 1px 3px rgba(0,0,0,.5)}
.i{width:24px;display:flex;justify-content:center;flex:none}:host([active]) .i{width:28px}
.t{margin-left:8px;flex:none;width:141px;overflow:hidden}:host([fade]) .t{-webkit-mask:linear-gradient(90deg,#000 calc(100% - 28px),transparent calc(100% + 4px))}:host([active]) .t{margin-left:6px}`,
 '<div class="i"><slot name="icon"></slot></div><div class="t"><slot></slot></div>');
const tab = (icon, s, w, attr='fade') => `<page-tab ${attr}><ui-icon slot="icon" name="${icon}"></ui-icon>${tx(s,w)}</page-tab>`;
define('tab-strip', `:host{display:flex;align-items:center;height:63px;background:#4b4b53;color:#f2f2f4;font-size:18.500px;flex:none}`,
 ic('spaces',18)+tx('Workspaces',95,14)+ic('caret',15,'color:#b9b9be;margin-right:24px')+
 tab('gpt','S3 Data Retrieval',135)+tab('bsearch','aws console log in',139)+tab('dynamo','Items | Amazon D',138)+tab('doc','Student Data',104,'')+tab('lambda','getStudent | Func',139,'active fade')+tab('api','API Gateway - Sta',140)+tab('doc','4celoiy129.execut',140)+tab('doc','snjn1hriwk.execut',139)+
 ic('plus',10,'color:#b9b9be')+ic('cloud',70,'color:#b9b9be'));

define('status-bar', `:host{display:flex;align-items:center;height:51px;background:#4b4b53;color:#f2f2f4;font-size:16.500px;flex:none}ui-icon{margin-top:2px}
.z{width:194px;height:6px;border-radius:3px;background:#b9bccb;margin-left:16px;display:flex;align-items:center;flex:none}.z i{width:24px;height:24px;border-radius:50%;background:#2f2e38;border:1.500px solid #c8ccdb;margin-left:29px}`,
 ic('pause',20)+ic('cloud',29)+ic('mail',26)+ic('cal',28,'margin-top:-2px')+ic('capture',1091)+ic('image',28)+ic('split',24)+ic('pagecode',27)+tx('Reset',41,28,'color:#98989e')+'<div class="z"><i></i></div>'+tx('100 %',46,8)+tx('5:43 PM',60,31));

define('task-bar', `:host{display:flex;align-items:center;height:72px;padding-bottom:2px;border-top:2px solid #46689a;background:linear-gradient(90deg,#113e80 0,#174482 11%,#28579e 19%,#2d5ea6 30%,#28569f 50%,#2a5aa2 68%,#234f96 85%,#1c458c 100%);color:#fff;font-size:17.500px;flex:none;box-sizing:border-box}
.w{display:flex;width:31px;margin-left:33px;flex:none}.b{width:24px;height:24px;border-radius:50%;background:#c42b1c;display:flex;align-items:center;justify-content:center;margin:-11px 0 0 -17px;font-size:16px;flex:none}
.s{width:326px;height:44px;border-radius:22px;background:#f2f6fb;margin-left:22px;display:flex;align-items:center;color:#5c5f64;font-size:18.500px;flex:none}
.t{display:flex;width:36px;margin-left:30px;flex:none}.v{margin-left:32px;flex:none}.v i{display:block;width:9px;height:5px;border-radius:3px;background:#9fb4d4;margin:8px auto -13px}
.two{display:flex;flex-direction:column;align-items:center;line-height:23.500px;flex:none}`,
 `<div class="w">${ic('weather')}<div class="b">1</div></div>`+ic('win',260)+`<div class="s">${ic('search',17,'color:#222')+tx('Search',61,16)+ic('food',135)}</div>`+
 ic('tview',20)+ic('copilot',30)+ic('opera',31)+ic('edge',31)+`<div class="t">${ic('teams')}<div class="b" style="margin:-7px 0 0 -16px;background:#d83b01;font-weight:700">!</div></div>`+ic('store',31)+ic('asus',31)+ic('folder',30)+`<div class="v">${ic('viv2')}<i></i></div>`+
 ic('chev',252)+`<div class="two" style="margin-left:31px">${tx('ENG',34)}${tx('IN',18)}</div>`+ic('wifi',28)+ic('sound',12)+ic('battery',12)+`<div class="two" style="margin-left:25px;align-items:flex-end">${tx('5:43 PM',65)}${tx('11/6/2024',83)}</div>`+ic('notif',14));

define('recorder-dock', `:host{position:absolute;right:0;bottom:0;width:39px;height:189px;background:#1b1b1b;border-top-left-radius:5px;border-top:1px solid #000;color:#fff;display:flex;flex-direction:column;align-items:flex-start;padding:5px 0 0 5px;box-sizing:border-box}.r{display:flex;align-items:center;width:30px;height:13px}`,
 `<div class="r">${ic('brush')+ic('dots',4)}</div>`+ic('camera',0,'margin-top:12px')+ic('video',0,'margin-top:20px')+ic('layers',0,'margin-top:17px')+ic('cog',0,'margin-top:15px'));

define('desktop-screen', `:host{display:flex;flex-direction:column;width:1920px;height:1080px;position:relative;overflow:hidden}.mid{display:flex;height:824px;flex:none}.con{display:flex;flex-direction:column;width:1834px;flex:none;font-family:"Noto Sans","Open Sans",sans-serif}
browser-toolbar,side-panel,console-header,console-body,console-footer,page-scrollbar,tab-strip,status-bar{box-sizing:border-box}`,
 '<browser-toolbar></browser-toolbar><div class="mid"><side-panel></side-panel><div class="con"><console-header></console-header><console-body></console-body><console-footer></console-footer></div><page-scrollbar></page-scrollbar></div><tab-strip></tab-strip><status-bar></status-bar><task-bar></task-bar><recorder-dock></recorder-dock>');
</script>
</body>
</html>
